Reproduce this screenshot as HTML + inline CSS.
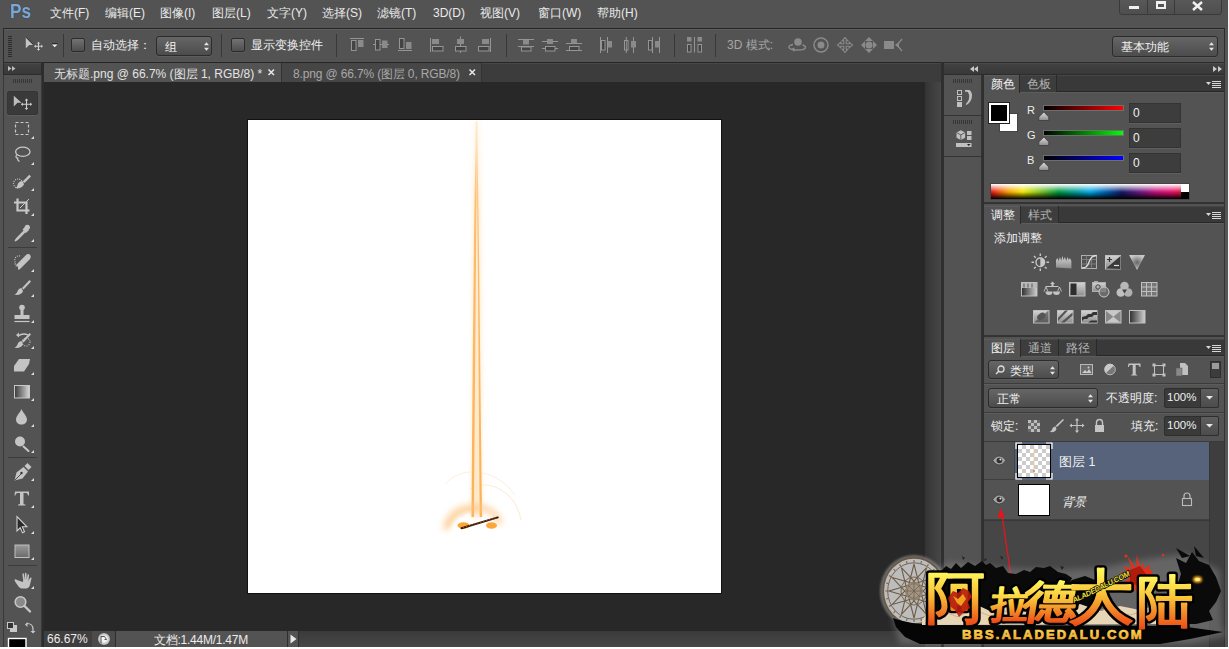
<!DOCTYPE html>
<html><head><meta charset="utf-8">
<style>
*{margin:0;padding:0;box-sizing:border-box}
html,body{width:1229px;height:649px;overflow:hidden;background:#535353;font-family:"Liberation Sans",sans-serif;font-size:12px;color:#e6e6e6}
.a{position:absolute}
svg{position:absolute;overflow:visible}
.mi{top:5px;font-size:12px;color:#eaeaea;white-space:nowrap}
.sep{position:absolute;width:1px;background:#383838}
.cb{position:absolute;width:14px;height:14px;border:1px solid #2c2c2c;border-radius:2px;background:linear-gradient(#727272,#4e4e4e);box-shadow:0 1px 0 #5c5c5c}
.dd{position:absolute;border:1px solid #2c2c2c;border-radius:3px;background:linear-gradient(#666,#4c4c4c);color:#f2f2f2;box-shadow:0 1px 0 #5c5c5c}
.t{position:absolute;white-space:nowrap}
.tabrow{position:absolute;height:18px;background:#393939;box-shadow:inset 0 1px 0 #464646;border-bottom:1px solid #5c5c5c}
.tabrow:after{content:"";position:absolute;left:0;bottom:0;width:100%;height:1px;background:#272727}
.tab{position:absolute;top:0;height:17px;color:#b4b4b4;font-size:12px;padding-left:7px;line-height:19px;border-right:1px solid #2a2a2a;background:#3d3d3d;box-shadow:inset 0 1px 0 #484848}
.tab.on{background:#535353;color:#f2f2f2;height:18px;box-shadow:inset 0 1px 0 #5c5c5c}
.pmenu{position:absolute;width:15px;height:8px}
</style></head><body>
<!-- MENU BAR -->
<div class="a" style="left:10px;top:-1px;font-size:20.5px;line-height:24px;font-weight:bold;color:#76a8da;transform:scaleX(0.84);transform-origin:0 0;text-shadow:0 0 1px #333">Ps</div>
<div class="a mi" style="left:50px">文件(F)</div>
<div class="a mi" style="left:105px">编辑(E)</div>
<div class="a mi" style="left:160px">图像(I)</div>
<div class="a mi" style="left:212px">图层(L)</div>
<div class="a mi" style="left:267px">文字(Y)</div>
<div class="a mi" style="left:322px">选择(S)</div>
<div class="a mi" style="left:377px">滤镜(T)</div>
<div class="a mi" style="left:433px;top:6px">3D(D)</div>
<div class="a mi" style="left:480px">视图(V)</div>
<div class="a mi" style="left:538px">窗口(W)</div>
<div class="a mi" style="left:597px">帮助(H)</div>
<!-- window controls -->
<div class="a" style="left:1119px;top:-3px;width:103px;height:18px;border:1px solid #3a3a3a;border-radius:3px;background:linear-gradient(#5a5a5a,#4e4e4e)"></div>
<div class="a" style="left:1147px;top:0;width:1px;height:15px;background:#3a3a3a"></div>
<div class="a" style="left:1174px;top:0;width:1px;height:15px;background:#3a3a3a"></div>
<div class="a" style="left:1129px;top:6px;width:10px;height:3px;background:#f0f0f0"></div>
<div class="a" style="left:1156px;top:1px;width:10px;height:8px;border:2px solid #f0f0f0;border-top-width:3px"></div>
<svg style="left:1192px;top:1px" width="12" height="10"><path d="M1 1L10 9M10 1L1 9" stroke="#f0f0f0" stroke-width="2.4"/></svg>

<!-- OPTIONS BAR -->
<div class="a" style="left:3px;top:28px;width:1222px;height:35px;background:#535353;border:1px solid #2c2c2c;border-top-color:#262626;border-bottom-color:#262626;box-shadow:inset 0 1px 0 #5f5f5f"></div>
<div class="a" style="left:8px;top:36px;width:4px;height:21px;background:repeating-linear-gradient(#2c2c2c 0 1px,transparent 1px 2px)"></div>
<svg style="left:0;top:0" width="1" height="1"><path d="M25.8 37.5L33.2 45H29.3L25.8 48.2Z" fill="#c4c4c4"/><path d="M26.3 37.5L33.5 44.7" stroke="#2a2a2a" stroke-width="0.9"/>
<g fill="#d0d0d0"><path d="M38.5 41.8L36.8 43.6H40.2ZM38.5 50.8L36.8 49H40.2ZM34 46.3L35.8 44.6V48ZM43 46.3L41.2 44.6V48Z"/></g><path d="M38.5 43V49.5M35.3 46.3H41.7" stroke="#d0d0d0" stroke-width="1.1"/></svg>
<svg style="left:52px;top:43px" width="6" height="5"><path d="M0 0.5H5.5" stroke="#2a2a2a"/><path d="M0 1.5H5.5L2.75 4.3Z" fill="#f0f0f0"/></svg>
<div class="sep" style="left:63px;top:34px;height:23px"></div>
<div class="cb" style="left:71px;top:38px"></div>
<div class="t" style="left:91px;top:37px;color:#eee">自动选择：</div>
<div class="dd" style="left:156px;top:36px;width:56px;height:20px"><span class="t" style="left:8px;top:2px">组</span>
<svg style="left:46px;top:4px" width="7" height="11"><path d="M1 4.3L3.5 1.3L6 4.3ZM1 6.7L3.5 9.7L6 6.7Z" fill="#e6e6e6"/></svg></div>
<div class="sep" style="left:221px;top:34px;height:23px"></div>
<div class="cb" style="left:231px;top:38px"></div>
<div class="t" style="left:251px;top:37px;color:#eee">显示变换控件</div>
<div class="sep" style="left:336px;top:34px;height:23px"></div>
<svg style="left:0;top:0" width="1" height="1">
 <g fill="#444" stroke="#959595" stroke-width="1">
  <path d="M350 38.5H364" fill="none"/><rect x="351.5" y="40.5" width="4.5" height="10"/><rect x="358" y="40" width="5.5" height="7" fill="#8a8a8a" stroke="none"/>
  <path d="M373 44.5H389" fill="none"/><rect x="375.5" y="39.5" width="4.5" height="10.5"/><rect x="382" y="40.5" width="5.5" height="7.5" fill="#8a8a8a" stroke="none"/>
  <path d="M398 50.5H412" fill="none"/><rect x="399.5" y="38.5" width="4.5" height="10"/><rect x="406" y="42" width="5.5" height="7" fill="#8a8a8a" stroke="none"/>
  <path d="M430.5 38V52" fill="none"/><rect x="432" y="39" width="7" height="5" fill="#8a8a8a" stroke="none"/><rect x="432.5" y="46.5" width="10.5" height="4.5"/>
  <path d="M460.5 36.5V53" fill="none"/><rect x="457" y="39" width="7" height="5" fill="#8a8a8a" stroke="none"/><rect x="455.5" y="46.5" width="10.5" height="4.5"/>
  <path d="M490.5 38V52" fill="none"/><rect x="482" y="39" width="7" height="5" fill="#8a8a8a" stroke="none"/><rect x="478.5" y="46.5" width="10.5" height="4.5"/>
 </g>
</svg>
<div class="sep" style="left:506px;top:34px;height:23px"></div>
<svg style="left:0;top:0" width="1" height="1">
 <g fill="none" stroke="#959595" stroke-width="1">
  <path d="M518 39.5H534M518 46.5H534"/><rect x="523" y="40" width="6" height="4.5" fill="#8a8a8a" stroke="none"/><rect x="521.5" y="47" width="9.5" height="4" stroke="#959595" fill="#444"/>
  <path d="M542 41.5H558M542 48.5H558"/><rect x="547" y="39" width="6" height="5" fill="#8a8a8a" stroke="none"/><rect x="545.5" y="46.5" width="9.5" height="4.5" fill="#444"/>
  <path d="M566 43.5H582M566 50.5H582"/><rect x="571" y="39" width="6" height="4.5" fill="#8a8a8a" stroke="none"/><rect x="569.5" y="46.5" width="9.5" height="4" fill="#444"/>
  <path d="M600.5 37V53M607.5 37V53"/><rect x="601.5" y="40.5" width="3.5" height="9.5" fill="#444"/><rect x="608" y="41" width="4" height="6.5" fill="#8a8a8a" stroke="none"/>
  <rect x="624.5" y="40.5" width="3.5" height="9.5" fill="#444"/><path d="M626.3 37V53M633.5 37V53"/><rect x="631" y="41" width="5" height="6.5" fill="#8a8a8a" stroke="none"/>
  <rect x="648.5" y="40.5" width="3.5" height="9.5" fill="#444"/><path d="M652.5 37V53M659.5 37V53"/><rect x="655" y="41" width="4.5" height="6.5" fill="#8a8a8a" stroke="none"/>
 </g>
</svg>
<div class="sep" style="left:674px;top:34px;height:23px"></div>
<svg style="left:0;top:0" width="1" height="1">
 <g fill="none" stroke="#959595" stroke-width="1">
  <rect x="687" y="37" width="4.5" height="4.5" fill="#8a8a8a" stroke="none"/><rect x="697.5" y="37" width="4.5" height="4.5" fill="#8a8a8a" stroke="none"/>
  <rect x="687.5" y="44.5" width="3.5" height="7.5" fill="#444"/><rect x="698" y="44.5" width="3.5" height="7.5" fill="#444"/><path d="M694.5 37V52.5"/>
 </g>
</svg>
<div class="sep" style="left:715px;top:34px;height:23px"></div>
<div class="t" style="left:727px;top:37px;color:#a6a6a6;font-size:12px">3D 模式:</div>
<svg style="left:0;top:0" width="1" height="1">
 <g fill="#8a8a8a" stroke="#8a8a8a">
  <circle cx="798" cy="42" r="3.8" stroke="none"/><path d="M793 44.5c-3 .5-4.5 2-4 3 .5 1.5 4 2.5 8.5 2.5 5 0 8-1 8-2.5 0-1-1-2-3-2.5" fill="none" stroke-width="1.4"/><path d="M791 49l3.5 3v-4.5Z" stroke="none"/>
  <circle cx="821" cy="45" r="7" fill="none" stroke-width="1.5"/><circle cx="821" cy="45" r="3.5" stroke="none"/>
  <path d="M845 37.5L847.8 40.8H846.2V43.8H849.2V42.2L852.5 45L849.2 47.8V46.2H846.2V49.2H847.8L845 52.5L842.2 49.2H843.8V46.2H840.8V47.8L837.5 45L840.8 42.2V43.8H843.8V40.8H842.2Z" fill="none" stroke-width="1.1"/>
  <circle cx="869" cy="45" r="3.5" stroke="none"/><path d="M869 37l-4 4h8zM869 53l-4-4h8zM861 45l4-4v8zM877 45l-4-4v8z" stroke="none"/>
  <rect x="884" y="41" width="10" height="8" stroke="none"/><path d="M895 45l4-3v6z" stroke="none"/><path d="M902 39l-5 6 5 6" fill="none" stroke-width="1.2"/>
 </g>
</svg>
<div class="dd" style="left:1112px;top:36px;width:106px;height:21px"><span class="t" style="left:8px;top:2px;font-size:12px">基本功能</span>
<svg style="left:95px;top:4px" width="7" height="11"><path d="M1 4.3L3.5 1.3L6 4.3ZM1 6.7L3.5 9.7L6 6.7Z" fill="#e6e6e6"/></svg></div>

<!-- LEFT TOOLS -->
<div class="a" style="left:0;top:62px;width:3px;height:585px;background:#535353"></div>
<div class="a" style="left:3px;top:62px;width:39px;height:585px;background:#535353;border-left:1px solid #383838;border-right:1px solid #383838"></div>
<div class="a" style="left:3px;top:62px;width:39px;height:13px;background:linear-gradient(#424242,#393939);border:1px solid #2c2c2c;box-shadow:inset 0 1px 0 #4a4a4a"></div>
<svg style="left:8px;top:66px" width="8" height="5"><path d="M0 0L3.5 2.5L0 5ZM4 0L7.5 2.5L4 5Z" fill="#bdbdbd"/></svg>
<div class="a" style="left:13px;top:79px;width:20px;height:4px;background:repeating-linear-gradient(90deg,#363636 0 1px,transparent 1px 2px)"></div>
<div class="a" style="left:42px;top:62px;width:2px;height:585px;background:#2d2d2d"></div>


<!-- TOOL ICONS -->
<div class="a" style="left:7px;top:91px;width:31px;height:24px;background:#3a3a3a;border-radius:3px;box-shadow:inset 0 0 0 1px #353535,0 1px 0 #5e5e5e"></div>
<div class="a" style="left:8px;top:247px;width:29px;height:1px;background:#3c3c3c"></div>
<div class="a" style="left:8px;top:457px;width:29px;height:1px;background:#3c3c3c"></div>
<div class="a" style="left:8px;top:565px;width:29px;height:1px;background:#3c3c3c"></div>
<svg style="left:0;top:0" width="1" height="1">
 <defs>
  <linearGradient id="gg" x1="0" x2="1"><stop offset="0" stop-color="#3a3a3a"/><stop offset="1" stop-color="#d8d8d8"/></linearGradient>
  <linearGradient id="gv" x1="0" y1="0" x2="0" y2="1"><stop offset="0" stop-color="#9a9a9a"/><stop offset="1" stop-color="#6a6a6a"/></linearGradient>
 </defs>
 <!-- move selected -->
 <path d="M13.8 95.7L21.5 102.8H17.5L13.8 106.5Z" fill="#bdbdbd"/>
 <path d="M26.5 99.5V109M21.8 104.3H31.2" stroke="#d0d0d0" stroke-width="1.1"/>
 <path d="M26.5 98.5L24.7 100.5H28.3ZM26.5 110L24.7 108H28.3ZM20.8 104.3L22.8 102.5V106.1ZM32.2 104.3L30.2 102.5V106.1Z" fill="#d0d0d0"/>
 <g fill="none" stroke="#c8c8c8">
  <!-- marquee -->
  <rect x="15.5" y="122.5" width="13" height="12" stroke-dasharray="3 2" stroke-width="1.2"/>
  <!-- lasso -->
  <ellipse cx="22.8" cy="151.8" rx="7.2" ry="4.6" stroke-width="1.3"/>
  <path d="M17 155c-2 1-1 3 1 3.5M18 157.5c-1 1.5 0 3 1.5 4" stroke-width="1.2"/>
  <!-- quick select -->
  <circle cx="18" cy="183.5" r="4.5" stroke-dasharray="1 1.2" stroke-width="1.2"/>
  <!-- crop -->
  <path d="M17.5 198.5V210.5H29.5M14 202.5H26.5V214" stroke-width="2.2"/>
  <path d="M20 208L29 199" stroke-width="1"/>
  <!-- healing dotted -->
  <path d="M20 256c-4-1-6 3-5 6 0 2 1 4 2 5" stroke-dasharray="1 1.2" stroke-width="1.2"/>
  <!-- stamp line -->
  <path d="M14.5 321.5H29.5" stroke-width="1.2"/>
  <!-- history arrow -->
  <path d="M28 335c-3-1.5-7-1-10 1" stroke-width="1.3"/>
  <circle cx="26" cy="342" r="4" stroke-dasharray="1 1.3" stroke-width="1.1"/>
  <!-- gradient -->
  <rect x="14.5" y="385.5" width="15" height="12.5" fill="url(#gg)" stroke="#c8c8c8" stroke-width="1"/>
  <!-- type T -->
  <!-- zoom -->
  <circle cx="20.5" cy="602" r="5.3" stroke-width="1.6" fill="#8a8a8a"/>
  <path d="M24.5 606L30 611.5" stroke-width="2.4" stroke-linecap="round"/>
  <!-- dodge -->
  <path d="M23.5 446.5L28.5 451" stroke-width="2" stroke-linecap="round"/>
  <!-- swap arrow -->
  <path d="M27 623.5c4 0 6 2 6 6v2" stroke-width="1.2"/>
 </g>
 <g fill="#c4c4c4">
  <!-- quick select brush -->
  <path d="M29.3 174.8L31 176.5L24.5 183L22.8 181.3Z"/><path d="M23 181.5c-2.5-.8-5 1-5.5 3.5-.3 1.5-1 2.5-2 3 3 .8 7-.5 8.5-3.5Z"/>
  <!-- eyedropper -->
  <circle cx="27.3" cy="227.3" r="2.6"/><path d="M22.5 229.5L25.5 226.5L29 230L26 233Z"/><path d="M24 231L16.5 238.5L15 241L17.5 239.5L25 232Z" stroke="#c4c4c4" stroke-width="1.2"/>
  <!-- healing bandaid -->
  <path d="M18 267l-2-2 10-10c1.5-1.5 3.5-1 4 0 1 1 1 2.5 0 4l-10 10c-1 1-2 1-2 0Z"/>
  <!-- brush -->
  <path d="M29.5 280L31 281.5L23.5 289.5L22 288Z"/><path d="M22 288.5c-2-1-4 1-4.5 3-.5 1.5-2 2.5-3 3 3 1 7 0 8.5-3Z"/>
  <!-- stamp -->
  <circle cx="22" cy="307.5" r="2.8"/><rect x="20.5" y="309" width="3" height="6"/><path d="M14.5 315h15v4h-15Z"/>
  <!-- history brush -->
  <path d="M29.5 333L31 334.5L23.5 342.5L22 341Z"/><path d="M22 341.5c-2-1-4 1-4.5 3-.5 1.5-2 2.5-3 3 3 1 7 0 8.5-3Z"/><path d="M16 335l3-2.5v5Z"/>
  <!-- eraser -->
  <path d="M14 366l5-7h11l-1 5-5 7.5h-10Z"/>
  <!-- blur -->
  <path d="M21.5 409c-1 3-5.5 7-5.5 10.5 0 3 2.5 5 5.5 5s5.5-2 5.5-5c0-3.5-4.5-7.5-5.5-10.5Z"/>
  <!-- dodge -->
  <circle cx="20" cy="441.5" r="5"/>
  <!-- pen -->
  <path d="M14.5 480.5L16.5 472.5L23.5 467L28 471.5L22.5 478.5Z"/><path d="M24.5 466L27.5 463L31.5 467L28.5 470Z"/>
  <!-- T -->
  <path d="M15 491.5h14v4h-1c0-1.5-1-2.5-2-2.5h-2.5v10.5c0 .8.8 1 2 1v1h-7.5v-1c1.2 0 2-.2 2-1v-10.5h-2.5c-1 0-2 1-2 2.5h-1Z"/>
  <!-- hand -->
  <path d="M17 580c-1-1-2.5-1-2.5 0 0 1 3 5 4.5 7 1 1 2 1.5 4 1.5h3c2 0 4-2 4-4l1.5-6c.3-1-1-1.5-1.5-.5l-1.5 3 .5-6c0-1-1.5-1-1.5 0l-.8 5-.2-6.5c0-1-1.6-1-1.6 0v6.5l-1-6c-.1-1-1.5-.8-1.5.2l.8 6.3-.3 1.5Z"/>
 </g>
 <!-- path select -->
 <path d="M17 516.5V531l3.2-3.2 2.3 5 2-1-2.2-5h4.6Z" fill="#2a2a2a" stroke="#cfcfcf" stroke-width="1.1"/>
 <!-- shape -->
 <rect x="15" y="545" width="14" height="12.5" fill="url(#gv)" stroke="#c0c0c0" stroke-width="1"/>
 <!-- pen nib dot -->
 <circle cx="21.5" cy="473" r="1.2" fill="#333"/><path d="M15 480L21 474" stroke="#333" stroke-width="0.8"/>
 <!-- default colors -->
 <rect x="10" y="625" width="7" height="7" fill="#c8c8c8"/><rect x="7.5" y="622.5" width="6" height="6" fill="#333" stroke="#c8c8c8"/>
 <path d="M25 624.5l2.5-2.5v5Z" fill="#c8c8c8"/><path d="M33 633.5l-2.5-2.5h5Z" fill="#c8c8c8"/>
 <!-- fg swatch -->
 <rect x="8.5" y="638.5" width="17.5" height="10" fill="#000" stroke="#fff" stroke-width="1.4"/>
 <!-- small triangles -->
 <g fill="#e0e0e0">
  <path d="M31 139h3v-3Z"/><path d="M31 165h3v-3Z"/><path d="M31 191h3v-3Z"/><path d="M31 216h3v-3Z"/><path d="M31 242h3v-3Z"/>
  <path d="M31 272h3v-3Z"/><path d="M31 297h3v-3Z"/><path d="M31 323h3v-3Z"/><path d="M31 349h3v-3Z"/><path d="M31 375h3v-3Z"/>
  <path d="M31 401h3v-3Z"/><path d="M31 427h3v-3Z"/><path d="M31 453h3v-3Z"/><path d="M31 481h3v-3Z"/><path d="M31 508h3v-3Z"/>
  <path d="M31 534h3v-3Z"/><path d="M31 560h3v-3Z"/><path d="M31 589h3v-3Z"/>
 </g>
</svg>
<!-- TAB BAR -->
<div class="a" style="left:44px;top:63px;width:897px;height:19px;background:#3c3c3c;box-shadow:inset 0 1px 0 #474747"></div>
<div class="a" style="left:44px;top:63px;width:238px;height:19px;background:#535353;border-right:1px solid #333"></div>
<div class="t" style="left:54px;top:66px;color:#e4e4e4">无标题.png @ 66.7% (图层 1, RGB/8) *</div>
<svg style="left:268px;top:69px" width="7" height="7"><path d="M0.5 0.5L6 6M6 0.5L0.5 6" stroke="#e8e8e8" stroke-width="1.5"/></svg>
<div class="a" style="left:282px;top:63px;width:200px;height:19px;background:#464646;border-right:1px solid #333"></div>
<div class="t" style="left:293px;top:66px;color:#a8a8a8;letter-spacing:-0.15px">8.png @ 66.7% (图层 0, RGB/8)</div>
<svg style="left:469px;top:69px" width="7" height="7"><path d="M0.5 0.5L6 6M6 0.5L0.5 6" stroke="#e8e8e8" stroke-width="1.5"/></svg>

<!-- CANVAS -->
<div class="a" style="left:44px;top:82px;width:881px;height:549px;background:#282828"></div>
<div class="a" style="left:925px;top:82px;width:16px;height:549px;background:linear-gradient(90deg,#343434,#474747)"></div>
<div class="a" style="left:941px;top:62px;width:3px;height:585px;background:#2f2f2f"></div>
<div class="a" style="left:247px;top:119px;width:475px;height:475px;background:#fff;border:1px solid #111"></div>


<svg style="left:0;top:0" width="1" height="1">
 <defs>
  <filter id="b1" x="-50%" y="-50%" width="200%" height="200%"><feGaussianBlur stdDeviation="2"/></filter>
  <filter id="b05" x="-50%" y="-50%" width="200%" height="200%"><feGaussianBlur stdDeviation="0.6"/></filter>
  <filter id="b3" x="-50%" y="-50%" width="200%" height="200%"><feGaussianBlur stdDeviation="3"/></filter>
 </defs>
 <linearGradient id="bfade" x1="0" y1="120" x2="0" y2="520" gradientUnits="userSpaceOnUse"><stop offset="0" stop-color="#fff" stop-opacity="0.25"/><stop offset="0.2" stop-color="#fff" stop-opacity="0.85"/><stop offset="1" stop-color="#fff" stop-opacity="1"/></linearGradient>
 <mask id="bmask" maskUnits="userSpaceOnUse" x="440" y="120" width="80" height="420"><rect x="440" y="120" width="80" height="420" fill="url(#bfade)"/></mask>
 <filter id="b09" x="-100%" y="-10%" width="300%" height="120%"><feGaussianBlur stdDeviation="0.9"/></filter>
 <!-- faint arcs -->
 <path d="M446 484C455 470 490 462 515 495" stroke="#fff2e4" stroke-width="1.1" fill="none" filter="url(#b05)"/>
 <path d="M470 489C490 478 516 492 521 520" stroke="#feecd8" stroke-width="1.1" fill="none" filter="url(#b05)"/>
 <g mask="url(#bmask)">
 <path d="M473.5 121L480 121L482 517L471.5 517Z" fill="#ffe4c0" opacity="0.85" filter="url(#b1)"/>
 <path d="M475.8 121L477 121L476.9 150C476.1 250 475 390 473.9 517L471.5 517C472.5 390 473.5 250 475.5 150Z" fill="#fcb256" filter="url(#b05)"/>
 <path d="M476.2 121L477.4 121L477.5 150C479.2 250 480.4 390 482.1 517L479.7 517C478.8 390 477.8 250 476.8 150Z" fill="#fcb256" filter="url(#b05)"/>
 <path d="M476.6 121V185" stroke="#fcb458" stroke-width="1.2" fill="none" filter="url(#b05)"/>
 </g>
 <!-- halo arc -->
 <path d="M446 530C446 515 460 507 474 507C488 507 498 514 500 524" stroke="#fcc888" stroke-width="6" fill="none" filter="url(#b3)" opacity="0.75"/>
 <path d="M448 527C452 514 466 509 476 509" stroke="#fbb560" stroke-width="2.5" fill="none" filter="url(#b1)" opacity="0.55"/>
<ellipse cx="463.5" cy="525.5" rx="6" ry="3.3" fill="#fba63a" filter="url(#b05)"/>
 <ellipse cx="491.5" cy="525.5" rx="5.5" ry="3.3" fill="#fba63a" filter="url(#b05)"/>
 <path d="M461.5 528.3L497.8 517.4" stroke="#3a1a06" stroke-width="2" stroke-linecap="round"/>
 <path d="M463 527.6L496.5 517.6" stroke="#b06a28" stroke-width="0.8" stroke-dasharray="1.2 1.8"/>
</svg>
<!-- STATUS BAR -->
<div class="a" style="left:44px;top:631px;width:881px;height:16px;background:linear-gradient(#3a3a3a,#474747)"></div>
<div class="a" style="left:44px;top:631px;width:48px;height:16px;background:#3f3f3f"></div>
<div class="t" style="left:47px;top:632px;color:#ececec;font-size:12px">66.67%</div>
<div class="a" style="left:92px;top:631px;width:23px;height:16px;background:#4b4b4b"></div>
<div class="a" style="left:98px;top:633px;width:12px;height:12px;border-radius:50%;background:radial-gradient(circle at 50% 50%,#f4f4f4 30%,#a8a8a8 75%,#5a5a5a 100%)"></div>
<svg style="left:0;top:0" width="1" height="1"><path d="M101 643.5V636.5H104.5L106.5 639.5H104.5" stroke="#444" stroke-width="0.9" fill="none"/></svg>
<div class="a" style="left:115px;top:631px;width:1px;height:16px;background:#2e2e2e"></div>
<div class="a" style="left:116px;top:631px;width:171px;height:16px;background:#535353"></div>
<div class="t" style="left:154px;top:632px;color:#ececec;font-size:12px;letter-spacing:-0.25px">文档:1.44M/1.47M</div>
<div class="a" style="left:287px;top:631px;width:12px;height:16px;background:#535353;border-left:1px solid #2e2e2e;border-right:1px solid #2e2e2e"></div>
<svg style="left:290px;top:634px" width="8" height="10"><path d="M0.5 0.5L6.5 5L0.5 9.5Z" fill="#e8e8e8"/></svg>
<div class="a" style="left:0;top:647px;width:1229px;height:2px;background:#fff"></div>

<!-- RIGHT -->
<div class="a" style="left:944px;top:62px;width:281px;height:13px;background:linear-gradient(#424242,#393939);border-top:1px solid #2c2c2c;border-bottom:1px solid #2c2c2c;box-shadow:inset 0 1px 0 #4a4a4a"></div>
<svg style="left:970px;top:66px" width="8" height="6"><path d="M4 0L0 3L4 6ZM8 0L4 3L8 6Z" fill="#c8c8c8"/></svg>
<svg style="left:1213px;top:66px" width="9" height="6"><path d="M0 0L4 3L0 6ZM5 0L9 3L5 6Z" fill="#c8c8c8"/></svg>
<div class="a" style="left:944px;top:75px;width:38px;height:572px;background:#535353;border-right:1px solid #333"></div>
<div class="a" style="left:944px;top:75px;width:38px;height:41px;border-bottom:1px solid #333"></div>
<div class="a" style="left:944px;top:116px;width:38px;height:41px;border-bottom:1px solid #333"></div>
<div class="a" style="left:982px;top:75px;width:2px;height:572px;background:#2f2f2f"></div>
<div class="a" style="left:1225px;top:28px;width:3px;height:619px;background:#555"></div><div class="a" style="left:1228px;top:0;width:1px;height:649px;background:#f4f4f4"></div>
<div class="a" style="left:1224px;top:62px;width:1px;height:585px;background:#333"></div>

<!-- color panel -->
<div class="a" style="left:984px;top:75px;width:240px;height:129px;background:#535353;border-bottom:2px solid #333"></div>
<div class="tabrow" style="left:984px;top:75px;width:240px"></div>
<div class="tab on" style="left:984px;top:75px;width:36px">颜色</div>
<div class="tab" style="left:1020px;top:75px;width:37px">色板</div>


<!-- icon column contents -->
<div class="a" style="left:953px;top:79px;width:20px;height:4px;background:repeating-linear-gradient(90deg,#363636 0 1px,transparent 1px 2px)"></div>
<div class="a" style="left:953px;top:120px;width:20px;height:4px;background:repeating-linear-gradient(90deg,#363636 0 1px,transparent 1px 2px)"></div>
<svg style="left:0;top:0" width="1" height="1">
 <g fill="none" stroke="#c0c0c0" stroke-width="1">
  <rect x="957.5" y="90.5" width="4" height="4"/><rect x="957.5" y="96.5" width="4" height="4"/>
 </g>
 <g fill="#c0c0c0">
  <rect x="957" y="102" width="5" height="5"/>
  <path d="M965 90h4.5c1.5 1 2.5 3 2.5 5.5 0 4-2 7.5-5.5 9.5l-.8-.8c2.5-2.5 3.5-5 3.5-8 0-2-.7-3.5-2-4.5H965Z"/>
  <path d="M956.5 132.5l4.3-2.3 4.3 2.3v5.2l-4.3 2.4-4.3-2.4Z"/>
  <rect x="967" y="131" width="4.5" height="4"/><rect x="967" y="136" width="4.5" height="4"/>
  <rect x="956" y="143" width="15.5" height="4"/>
 </g>
 <path d="M956.8 132.7l4 2.2 4-2.2M960.8 134.9v5" stroke="#555" stroke-width="0.9" fill="none"/>
 <path d="M967 144h3.5l-1.75 2Z" fill="#222"/>
</svg>

<!-- color panel contents -->
<div class="a" style="left:988px;top:102px;width:22px;height:22px;border:1px solid #7a7a7a;background:#444"></div>
<div class="a" style="left:999px;top:113px;width:19px;height:19px;background:#fff;border:1px solid #444"></div>
<div class="a" style="left:989px;top:103px;width:20px;height:20px;background:#000;border:2px solid #fff;box-shadow:0 0 0 1px #222"></div>
<div class="t" style="left:1027px;top:104px;color:#eee;font-size:11px">R</div>
<div class="t" style="left:1027px;top:129px;color:#eee;font-size:11px">G</div>
<div class="t" style="left:1027px;top:154px;color:#eee;font-size:11px">B</div>
<div class="a" style="left:1043px;top:105px;width:81px;height:6px;background:linear-gradient(90deg,#000,#f00);border:1px solid #6e6e6e"></div>
<div class="a" style="left:1043px;top:130px;width:81px;height:6px;background:linear-gradient(90deg,#000,#0f0);border:1px solid #6e6e6e"></div>
<div class="a" style="left:1043px;top:155px;width:81px;height:6px;background:linear-gradient(90deg,#000,#00f);border:1px solid #6e6e6e"></div>
<svg style="left:0;top:0" width="1" height="1">
 <defs><linearGradient id="tri" x1="0" y1="0" x2="0" y2="1"><stop offset="0" stop-color="#e0e0e0"/><stop offset="1" stop-color="#8a8a8a"/></linearGradient></defs>
 <g fill="url(#tri)" stroke="#3a3a3a" stroke-width="0.8">
  <path d="M1043.8 112L1048.8 117V120.5H1038.8V117Z"/>
  <path d="M1043.8 137L1048.8 142V145.5H1038.8V142Z"/>
  <path d="M1043.8 162L1048.8 167V170.5H1038.8V167Z"/>
 </g>
</svg>
<div class="a" style="left:1129px;top:103px;width:52px;height:20px;background:#3d3d3d;border:1px solid #333;box-shadow:0 1px 0 #5f5f5f"></div>
<div class="a" style="left:1129px;top:128px;width:52px;height:20px;background:#3d3d3d;border:1px solid #333;box-shadow:0 1px 0 #5f5f5f"></div>
<div class="a" style="left:1129px;top:153px;width:52px;height:20px;background:#3d3d3d;border:1px solid #333;box-shadow:0 1px 0 #5f5f5f"></div>
<div class="t" style="left:1133px;top:106px;color:#f0f0f0;font-size:12px">0</div>
<div class="t" style="left:1133px;top:131px;color:#f0f0f0;font-size:12px">0</div>
<div class="t" style="left:1133px;top:156px;color:#f0f0f0;font-size:12px">0</div>
<div class="a" style="left:990px;top:183px;width:200px;height:17px;border:1px solid #444;background:linear-gradient(90deg,#e8101a 0%,#f5a000 9%,#f2e600 16%,#7cc020 25%,#00963c 34%,#009a9a 43%,#00a6e6 50%,#0060b0 58%,#121a66 66%,#6a1a80 75%,#c0107a 83%,#e3106a 91%,#e01020 100%)">
 <div class="a" style="left:0;top:0;width:100%;height:50%;background:linear-gradient(#fff,rgba(255,255,255,0))"></div>
 <div class="a" style="left:0;top:50%;width:100%;height:50%;background:linear-gradient(rgba(0,0,0,0),#000)"></div>
 <div class="a" style="right:0;top:0;width:8px;height:8px;background:#fff"></div>
 <div class="a" style="right:0;top:8px;width:8px;height:7px;background:#000"></div>
</div>
<!-- adjustments panel -->
<div class="a" style="left:984px;top:206px;width:240px;height:131px;background:#535353;border-bottom:2px solid #333"></div>
<div class="tabrow" style="left:984px;top:206px;width:240px"></div>
<div class="tab on" style="left:984px;top:206px;width:37px">调整</div>
<div class="tab" style="left:1021px;top:206px;width:38px">样式</div>
<div class="t" style="left:994px;top:230px;color:#f0f0f0;font-size:12px">添加调整</div>


<svg style="left:0;top:0" width="1" height="1">
 <defs>
  <linearGradient id="lg1" x1="0" y1="0" x2="0" y2="1"><stop offset="0" stop-color="#d4d4d4"/><stop offset="1" stop-color="#8c8c8c"/></linearGradient>
  <linearGradient id="lgh" x1="0" x2="1"><stop offset="0" stop-color="#2e2e2e"/><stop offset="1" stop-color="#d0d0d0"/></linearGradient>
  <radialGradient id="rgv"><stop offset="0" stop-color="#666"/><stop offset="1" stop-color="#c8c8c8"/></radialGradient>
 </defs>
 <!-- row1 -->
 <g stroke="#c8c8c8" stroke-width="1.4" fill="none">
  <circle cx="1040.3" cy="262.3" r="4.3"/>
  <path d="M1040.3 253.5v2.5M1040.3 268.5v2.5M1031.5 262.3h2.5M1046.5 262.3h2.5M1034 256l1.7 1.7M1046.6 256l-1.7 1.7M1034 268.6l1.7-1.7M1046.6 268.6l-1.7-1.7"/>
 </g>
 <path d="M1040.3 258v8.6a4.3 4.3 0 0 0 0-8.6Z" fill="#c8c8c8"/>
 <path d="M1056 267.5V260l1.5-2 1 3 1.5-4 1.2 4 1.2-5 1.2 4 1.3-3 1.3 4 1.3-4 1.2 3 1.2-2 1.5 3v7.5Z" fill="url(#lg1)"/>
 <rect x="1081.5" y="255.5" width="15" height="13" fill="none" stroke="#b0b0b0" stroke-width="1"/>
 <path d="M1081.5 259.5h15M1081.5 264h15M1086.5 255.5v13M1091.5 255.5v13" stroke="#888" stroke-width="0.8"/>
 <path d="M1082 268c5 0 6-3 7.5-7s3-5 7-5.5" stroke="#e0e0e0" stroke-width="1.3" fill="none"/>
 <rect x="1105.5" y="255.5" width="15" height="13.5" fill="url(#lg1)" stroke="#c0c0c0" stroke-width="1"/>
 <path d="M1106 268.5L1120.5 256V269Z" fill="#3a3a3a"/>
 <path d="M1107 259.5h5M1109.5 257v5" stroke="#333" stroke-width="1.2"/><path d="M1114 265.5h5" stroke="#e0e0e0" stroke-width="1.2"/>
 <path d="M1129 255h16l-8 15Z" fill="url(#rgv)"/>
 <!-- row2 -->
 <rect x="1021.5" y="282.5" width="15.5" height="13.5" fill="url(#lgh)" stroke="#c0c0c0"/>
 <path d="M1022 283h15v5h-15Z" fill="#b8b8b8"/><path d="M1024 283.5v4M1028 283.5v4M1032 283.5v4" stroke="#777" stroke-width="1.5"/>
 <g fill="#c4c4c4">
  <path d="M1052.5 281.5l-2.5 2.5h1.5v2h-6v1h13v-1h-5v-2h1.5Z"/>
  <path d="M1045.5 291.5a3.5 3.5 0 0 0 7 0Z"/><path d="M1053 291.5a3.5 3.5 0 0 0 7 0Z"/>
 </g>
 <path d="M1046 287l-2 4.5M1046 287l2 4.5M1059.5 287l-2 4.5M1059.5 287l2 4.5M1052.7 284v3" stroke="#c4c4c4" stroke-width="0.9" fill="none"/>
 <rect x="1069.5" y="282.5" width="15.5" height="13.5" fill="url(#lg1)" stroke="#c0c0c0"/>
 <rect x="1070.5" y="283.5" width="6" height="11.5" fill="#2e2e2e"/>
 <rect x="1092.5" y="282.5" width="13" height="9" fill="url(#lg1)" stroke="#b0b0b0"/>
 <rect x="1094" y="281" width="4" height="2" fill="#b0b0b0"/>
 <circle cx="1098" cy="287" r="2.2" fill="none" stroke="#444" stroke-width="1"/>
 <circle cx="1104" cy="292" r="5" fill="rgba(120,120,120,0.7)" stroke="#c8c8c8" stroke-width="1"/>
 <circle cx="1124.5" cy="286" r="4.3" fill="#b8b8b8"/><circle cx="1120.8" cy="292.5" r="4.3" fill="#c0c0c0"/><circle cx="1128.2" cy="292.5" r="4.3" fill="#b0b0b0"/>
 <path d="M1122 289.5h5l-2.5 4Z" fill="#444"/>
 <rect x="1141.5" y="282.5" width="15.5" height="13.5" fill="#777" stroke="#c0c0c0"/>
 <path d="M1141.5 287h15.5M1141.5 291.5h15.5M1146.5 282.5v13.5M1151.5 282.5v13.5" stroke="#c0c0c0" stroke-width="1"/>
 <!-- row3 -->
 <rect x="1033.5" y="310.5" width="15.5" height="12.5" fill="url(#lg1)" stroke="#c0c0c0"/>
 <path d="M1034 322.5l14.5-12v12Z" fill="#333" opacity="0.55"/><ellipse cx="1041.3" cy="316.5" rx="4.5" ry="3.2" fill="#555" transform="rotate(-35 1041.3 316.5)"/>
 <rect x="1057.5" y="310.5" width="15.5" height="12.5" fill="url(#lg1)" stroke="#c0c0c0"/>
 <path d="M1058 318l7-7.5h3l-10 10.5ZM1061 322.5l11.5-10v3l-8 7Z" fill="#555"/>
 <rect x="1081.5" y="310.5" width="15.5" height="12.5" fill="url(#lg1)" stroke="#c0c0c0"/>
 <path d="M1082 317l4-1 2-2h3l2-2h4v3h-3l-2 2h-3l-2 2h-3l-2 2Z" fill="#333"/><path d="M1088 322.5l3-2h6v2Z" fill="#333"/>
 <rect x="1105.5" y="310.5" width="15.5" height="12.5" fill="#888" stroke="#c0c0c0"/>
 <path d="M1106 311l7.3 5.8L1120.5 311ZM1106 322.5l7.3-5.8 7.2 5.8Z" fill="#c8c8c8"/>
 <rect x="1129.5" y="310.5" width="15.5" height="12.5" fill="url(#lgh)" stroke="#c0c0c0"/>
</svg>
<!-- layers panel -->
<div class="a" style="left:984px;top:339px;width:240px;height:308px;background:#464646"></div>
<div class="tabrow" style="left:984px;top:339px;width:240px"></div>
<div class="tab on" style="left:984px;top:339px;width:37px">图层</div>
<div class="tab" style="left:1021px;top:339px;width:38px">通道</div>
<div class="tab" style="left:1059px;top:339px;width:38px">路径</div>
<div class="a" style="left:984px;top:357px;width:240px;height:85px;background:#535353"></div>


<!-- panel menu icons -->
<svg style="left:0;top:0" width="1" height="1">
 <g fill="#d8d8d8">
  <path d="M1206 82h5l-2.5 3Z"/><path d="M1212 81h9v1h-9ZM1212 83h9v1h-9ZM1212 85h9v1h-9ZM1212 87h9v1h-9Z"/>
  <path d="M1206 213h5l-2.5 3Z"/><path d="M1212 212h9v1h-9ZM1212 214h9v1h-9ZM1212 216h9v1h-9ZM1212 218h9v1h-9Z"/>
  <path d="M1206 346h5l-2.5 3Z"/><path d="M1212 345h9v1h-9ZM1212 347h9v1h-9ZM1212 349h9v1h-9ZM1212 351h9v1h-9Z"/>
 </g>
</svg>
<!-- filter row -->
<div class="dd" style="left:988px;top:360px;width:71px;height:19px"><span class="t" style="left:21px;top:2px">类型</span>
<svg style="left:6px;top:4px" width="10" height="10"><circle cx="6" cy="4" r="3" stroke="#ddd" stroke-width="1.3" fill="none"/><path d="M4 6L1 9" stroke="#ddd" stroke-width="1.5"/></svg>
<svg style="left:60px;top:4px" width="7" height="11"><path d="M1 4.3L3.5 1.3L6 4.3ZM1 6.7L3.5 9.7L6 6.7Z" fill="#e6e6e6"/></svg></div>
<svg style="left:0;top:0" width="1" height="1">
 <rect x="1080.5" y="364.5" width="12" height="10" fill="#6a6a6a" stroke="#b8b8b8"/>
 <path d="M1082 373l3-3 2 2 2-3 2.5 4Z" fill="#ccc"/><circle cx="1088.5" cy="367.5" r="1" fill="#ccc"/>
 <circle cx="1110" cy="369.5" r="5.3" fill="#777" stroke="#b8b8b8" stroke-width="1"/><path d="M1106 373a5.3 5.3 0 0 1 8-7.5Z" fill="#c8c8c8"/>
 <path d="M1128.5 363.5h12v3.5h-1c0-1-.5-2-1.5-2h-2.3v9c0 .6.6.8 1.5.8v.7h-6v-.7c.9 0 1.5-.2 1.5-.8v-9h-2.3c-1 0-1.5 1-1.5 2h-1Z" fill="#c4c4c4"/>
 <rect x="1154.5" y="365.5" width="9" height="9" fill="none" stroke="#c0c0c0"/>
 <g fill="#c0c0c0"><rect x="1152.5" y="363.5" width="3" height="3"/><rect x="1162.5" y="363.5" width="3" height="3"/><rect x="1152.5" y="373.5" width="3" height="3"/><rect x="1162.5" y="373.5" width="3" height="3"/></g>
 <path d="M1180 363h5l3 3v9h-8Z" fill="#c0c0c0"/><rect x="1176" y="368" width="6" height="8" fill="#888" stroke="#555" stroke-width="0.5"/>
 <rect x="1210.5" y="361.5" width="10" height="16" fill="#3c3c3c" stroke="#2e2e2e"/><rect x="1212" y="363" width="7" height="6" fill="#9a9a9a"/>
</svg>
<div class="a" style="left:984px;top:383px;width:240px;height:1px;background:#3c3c3c;box-shadow:0 1px 0 #5c5c5c"></div>
<!-- blend row -->
<div class="dd" style="left:988px;top:388px;width:110px;height:20px"><span class="t" style="left:8px;top:2px">正常</span>
<svg style="left:98px;top:4px" width="7" height="11"><path d="M1 4.3L3.5 1.3L6 4.3ZM1 6.7L3.5 9.7L6 6.7Z" fill="#e6e6e6"/></svg></div>
<div class="t" style="left:1106px;top:390px;color:#eee">不透明度:</div>
<div class="a" style="left:1164px;top:388px;width:55px;height:20px;background:#3a3a3a;border:1px solid #2e2e2e;border-radius:2px"></div>
<div class="a" style="left:1200px;top:388px;width:19px;height:20px;background:linear-gradient(#5e5e5e,#4c4c4c);border:1px solid #2e2e2e;border-radius:0 2px 2px 0"></div>
<div class="t" style="left:1167px;top:391px;color:#f0f0f0;font-size:11.5px">100%</div>
<svg style="left:1206px;top:396px" width="7" height="4"><path d="M0 0H7L3.5 3.5Z" fill="#e8e8e8"/></svg>
<div class="a" style="left:984px;top:412px;width:240px;height:1px;background:#3c3c3c;box-shadow:0 1px 0 #5c5c5c"></div>
<!-- lock row -->
<div class="t" style="left:991px;top:418px;color:#eee">锁定:</div>
<svg style="left:0;top:0" width="1" height="1">
 <g fill="#bdbdbd"><rect x="1028" y="420" width="12" height="12" fill="#6a6a6a"/>
 <rect x="1028" y="420" width="3" height="3"/><rect x="1034" y="420" width="3" height="3"/><rect x="1031" y="423" width="3" height="3"/><rect x="1037" y="423" width="3" height="3"/><rect x="1028" y="426" width="3" height="3"/><rect x="1034" y="426" width="3" height="3"/><rect x="1031" y="429" width="3" height="3"/><rect x="1037" y="429" width="3" height="3"/></g>
 <path d="M1063 419l1 1-7 7-1.5-1Z" fill="#c4c4c4"/><path d="M1055.5 426.5c-2 0-3 1.5-3.5 3-.3 1-1.3 2-2.5 2.5 3 .5 6 0 7-3Z" fill="#c4c4c4"/>
 <path d="M1077 419v13M1070.5 425.5h13" stroke="#c4c4c4" stroke-width="1.2"/><path d="M1077 418l-2 2.5h4ZM1077 433l-2-2.5h4ZM1069.5 425.5l2.5-2v4ZM1084.5 425.5l-2.5-2v4Z" fill="#c4c4c4"/>
 <path d="M1096.5 425v-2.5a3 3 0 0 1 6 0V425" stroke="#c4c4c4" stroke-width="1.4" fill="none"/><rect x="1095" y="425" width="9" height="7" fill="#c4c4c4"/>
</svg>
<div class="t" style="left:1131px;top:418px;color:#eee">填充:</div>
<div class="a" style="left:1164px;top:416px;width:55px;height:20px;background:#3a3a3a;border:1px solid #2e2e2e;border-radius:2px"></div>
<div class="a" style="left:1200px;top:416px;width:19px;height:20px;background:linear-gradient(#5e5e5e,#4c4c4c);border:1px solid #2e2e2e;border-radius:0 2px 2px 0"></div>
<div class="t" style="left:1167px;top:419px;color:#f0f0f0;font-size:11.5px">100%</div>
<svg style="left:1206px;top:424px" width="7" height="4"><path d="M0 0H7L3.5 3.5Z" fill="#e8e8e8"/></svg>
<div class="a" style="left:984px;top:441px;width:240px;height:1px;background:#3a3a3a"></div>
<!-- layer rows -->
<div class="a" style="left:984px;top:442px;width:225px;height:38px;background:#535353;border-bottom:1px solid #3f3f3f"></div>
<div class="a" style="left:1015px;top:442px;width:194px;height:38px;background:#56637a"></div>
<div class="a" style="left:1014px;top:442px;width:1px;height:78px;background:#444"></div>
<div class="a" style="left:984px;top:480px;width:225px;height:40px;background:#535353;border-bottom:1px solid #3f3f3f"></div>
<div class="a" style="left:1209px;top:442px;width:15px;height:205px;background:#3e3e3e;border-left:1px solid #363636"></div><div class="a" style="left:984px;top:520px;width:225px;height:1px;background:#383838"></div>
<div class="a" style="left:1017px;top:444px;width:34px;height:34px;border:1px solid #000;background-color:#fff;background-image:linear-gradient(45deg,#ccc 25%,transparent 25%,transparent 75%,#ccc 75%),linear-gradient(45deg,#ccc 25%,transparent 25%,transparent 75%,#ccc 75%);background-size:8px 8px;background-position:0 0,4px 4px"></div>
<svg style="left:0;top:0" width="1" height="1">
 <path d="M1016 449v-6h6M1046 443h6v6M1016 473v6h6M1046 479h6v-6" stroke="#fff" stroke-width="1.2" fill="none"/>
 <path d="M1034 447v27" stroke="#f4c890" stroke-width="0.8"/><circle cx="1034" cy="471" r="0.9" fill="#c88040"/>
</svg>
<div class="t" style="left:1059px;top:454px;color:#f0f0f0;font-size:12.5px">图层 1</div>
<div class="a" style="left:1018px;top:484px;width:32px;height:32px;border:1px solid #000;background:#fff"></div>
<div class="t" style="left:1062px;top:494px;color:#f0f0f0;font-size:12px;font-style:italic">背景</div>
<svg style="left:0;top:0" width="1" height="1">
 <path d="M1184 498v-2a3 3 0 0 1 6 0v2" stroke="#bbb" stroke-width="1.2" fill="none"/><rect x="1182.5" y="498.5" width="9" height="7" fill="none" stroke="#bbb" stroke-width="1.1"/>
 <g fill="#a4a4a4" stroke="#363636" stroke-width="0.7">
 <path d="M992.8 460.5c2-2.9 4.1-4.4 6.5-4.4s4.5 1.5 6.3 4.4c-1.8 2.9-3.9 4.4-6.3 4.4s-4.5-1.5-6.5-4.4Z"/>
 <path d="M992.8 499.5c2-2.9 4.1-4.4 6.5-4.4s4.5 1.5 6.3 4.4c-1.8 2.9-3.9 4.4-6.3 4.4s-4.5-1.5-6.5-4.4Z"/>
 </g>
 <circle cx="999.4" cy="460.5" r="2.8" fill="#303030"/><circle cx="1000.4" cy="459.4" r="1" fill="#e8e8e8"/>
 <circle cx="999.4" cy="499.5" r="2.8" fill="#303030"/><circle cx="1000.4" cy="498.4" r="1" fill="#e8e8e8"/>
 <!-- red arrow -->
 <path d="M1001.5 512L1013 590" stroke="#e8141c" stroke-width="1.3" fill="none"/>
 <path d="M1000.5 508.5L997.5 518L1005 517Z" fill="#e8141c"/>
</svg>

<!-- LOGO WATERMARK -->
<svg style="left:0;top:0" width="1" height="1">
 <defs>
  <linearGradient id="lgold" x1="0" y1="0" x2="0" y2="1"><stop offset="0.1" stop-color="#fff65c"/><stop offset="0.45" stop-color="#f9c238"/><stop offset="1" stop-color="#ea3a10"/></linearGradient>
  <linearGradient id="lbbs" x1="0" y1="0" x2="0" y2="1"><stop offset="0" stop-color="#ffe060"/><stop offset="1" stop-color="#f0a020"/></linearGradient>
  <filter id="glow" x="-20%" y="-50%" width="140%" height="200%"><feGaussianBlur stdDeviation="3"/></filter>
  <filter id="g1" x="-50%" y="-50%" width="200%" height="200%"><feGaussianBlur stdDeviation="1"/></filter>
 </defs>
 <!-- outer glow -->
 <path d="M925 575L950 562L1000 568L1060 570L1100 568L1140 560L1185 554L1220 570L1222 625L1226 636L1190 644L900 644L892 620L925 600Z" fill="#a0a0a0" opacity="0.35" filter="url(#glow)"/>
 <!-- compass -->
 <ellipse cx="914" cy="591" rx="34" ry="36" fill="#9c9c9c" opacity="0.6" filter="url(#g1)"/>
 <ellipse cx="914" cy="591" rx="30.8" ry="33.2" fill="#bdbdbd" stroke="#6a5842" stroke-width="1.7"/>
 <ellipse cx="914" cy="591" rx="26.3" ry="28.2" fill="none" stroke="#76644e" stroke-width="1"/>
 <path d="M940.5 591.0L942.8 591.0M939.6 598.4L941.8 599.0M937.0 605.2L939.0 606.5M932.7 611.2L934.4 612.9M927.3 615.7L928.4 617.8M920.9 618.5L921.5 620.9M914.0 619.5L914.0 622.0M907.1 618.5L906.5 620.9M900.7 615.7L899.6 617.8M895.3 611.2L893.6 612.9M891.0 605.2L889.0 606.5M888.4 598.4L886.2 599.0M887.5 591.0L885.2 591.0M888.4 583.6L886.2 583.0M891.0 576.8L889.0 575.5M895.3 570.8L893.6 569.1M900.7 566.3L899.6 564.2M907.1 563.5L906.5 561.1M914.0 562.5L914.0 560.0M920.9 563.5L921.5 561.1M927.3 566.3L928.4 564.2M932.7 570.8L934.4 569.1M937.0 576.8L939.0 575.5M939.6 583.6L941.8 583.0" stroke="#7a6850" stroke-width="1.2"/>
 <path d="M914.0 564.0 L926.6 614.4 L892.3 577.5 L939.1 591.0 L892.3 604.5 L926.6 567.6 L914.0 618.0 L901.4 567.6 L935.7 604.5 L888.9 591.0 L935.7 577.5 L901.4 614.4Z" fill="none" stroke="#6e5c46" stroke-width="1.1"/>
 <ellipse cx="914" cy="591" rx="13" ry="14" fill="none" stroke="#7a6850" stroke-width="1"/>
 <ellipse cx="914" cy="591" rx="9" ry="9.5" fill="#9a8a74" opacity="0.75"/>
 <path d="M906 591H922M914 582V600M908 585L920 597M920 585L908 597" stroke="#6e5c46" stroke-width="0.7"/>
 <!-- black ink backing -->
 <path d="M928 590L932 578L940 572L946 566L951 569L956 563L961 568L968 562L975 566L982 561L986 565L990 563L996 568L1003 566L1008 573L1016 574L1024 570L1030 572L1036 567L1044 568L1050 566L1058 572L1066 574L1072 578L1066 590L1060 620L928 624Z" fill="#0a0a0a"/>
 <path d="M962 556l3 2-2 2ZM1000 556l3 1-1 3ZM1060 566l4 1-2 3ZM985 558l2 2-3 1Z" fill="#222"/>
 <path d="M1060 590L1072 580L1085 576L1095 580L1090 622L1060 624Z" fill="#0a0a0a"/>
 <path d="M1170 605L1176 590L1181 574L1176 558L1186 563L1192 552L1199 561L1209 565L1216 577L1221 591L1216 602L1209 611L1213 620L1196 624L1170 624Z" fill="#0a0a0a"/>
 <!-- black band -->
 <path d="M893 618C905 622 915 624 935 625L1180 626L1223 632L1190 639L1160 644L920 644L905 637L896 627Z" fill="#050505"/>
 <!-- cream wave -->
 <path d="M922 620L930 610L940 614L950 606L962 612L975 604L990 611L1005 606L1020 612L1040 605L1060 612L1080 604L1100 611L1120 606L1140 610L1160 604L1175 612L1180 624L922 625Z" fill="#e6d6b6"/>
 <path d="M930 618L945 612L958 617L972 609L990 616L1010 610L1030 617L1055 609L1080 616L1105 609L1130 615L1155 608L1172 617" stroke="#c9a882" stroke-width="0.8" fill="none"/>
 <!-- red splatter -->
 <path d="M1155.7 578.0 L1148.0 580.1 L1157.1 586.8 L1146.1 583.7 L1151.5 593.2 L1144.2 587.8 L1143.4 592.8 L1140.2 590.1 L1137.5 593.3 L1135.7 589.1 L1131.8 591.6 L1133.1 585.2 L1124.7 589.4 L1127.4 583.7 L1124.5 581.4 L1129.4 578.0 L1119.8 573.5 L1126.8 572.0 L1123.5 565.7 L1132.0 569.5 L1127.6 556.3 L1136.3 569.0 L1136.7 554.3 L1140.0 567.2 L1143.6 562.4 L1143.5 569.4 L1150.1 564.5 L1149.3 569.8 L1153.0 571.2 L1150.2 575.4Z" fill="#e2301a"/>
 <path d="M1130 570L1140 566L1146 574L1138 586L1130 582Z" fill="#b01c0c"/>
 <circle cx="1126" cy="556" r="1.6" fill="#e2301a"/><circle cx="1163" cy="555" r="1.3" fill="#e2301a"/><circle cx="1114" cy="590" r="1.2" fill="#e2301a"/><circle cx="1158" cy="600" r="1.2" fill="#e2301a"/>
 <path d="M1182 558L1176 548L1190 556ZM1196 556L1194 546L1204 558Z" fill="#0a0a0a"/>
 <!-- dragon eye -->
 <ellipse cx="1197.5" cy="579.5" rx="4.5" ry="3.2" fill="#ffb020" filter="url(#g1)"/>
 <ellipse cx="1197.5" cy="579.5" rx="2.5" ry="1.7" fill="#fff290"/>
 <!-- characters -->
 <g font-family="'Liberation Sans',sans-serif" stroke="#000" stroke-width="7" stroke-linejoin="round" fill="#000">
  <text x="0" y="0" font-size="56" transform="translate(926 617) scale(1.05 1)">阿</text>
  <text x="0" y="0" font-size="37" transform="translate(990 617) skewX(-6)">拉</text>
  <text x="0" y="0" font-size="45" transform="translate(1021 617) scale(1.2 1) skewX(-8)">德</text>
  <text x="0" y="0" font-size="60" transform="translate(1068 618) scale(1.1 1)">大</text>
  <text x="0" y="0" font-size="56" transform="translate(1137 621)">陆</text>
 </g>
 <g font-family="'Liberation Sans',sans-serif" stroke="url(#lgold)" stroke-width="2.2" stroke-linejoin="round" fill="url(#lgold)">
  <text x="0" y="0" font-size="56" transform="translate(926 617) scale(1.05 1)">阿</text>
  <text x="0" y="0" font-size="37" transform="translate(990 617) skewX(-6)">拉</text>
  <text x="0" y="0" font-size="45" transform="translate(1021 617) scale(1.2 1) skewX(-8)">德</text>
  <text x="0" y="0" font-size="60" transform="translate(1068 618) scale(1.1 1)">大</text>
  <text x="0" y="0" font-size="56" transform="translate(1137 621)">陆</text>
 </g>
 <path d="M948 598L953 591L958 593L963 588L969 591L972 597L968 602L970 608L964 612L959 617L955 610L951 607Z" fill="#b81c0c" opacity="0.9"/>
 <path d="M953 596L958 599L963 594L966 599L961 606L957 603Z" fill="#f0a020"/>
 <text x="1074" y="603" font-family="'Liberation Sans',sans-serif" font-style="italic" font-weight="bold" font-size="7.5" letter-spacing="-0.3" fill="#f2e040" stroke="#000" stroke-width="1.4" paint-order="stroke" transform="rotate(-26 1074 603)">ALADEDALU.COM</text>
 <text x="962" y="639" font-family="'Liberation Sans',sans-serif" font-weight="bold" font-size="13" letter-spacing="2.1" fill="url(#lbbs)" stroke="url(#lbbs)" stroke-width="0.7">BBS.ALADEDALU.COM</text>
</svg>
</body></html>
